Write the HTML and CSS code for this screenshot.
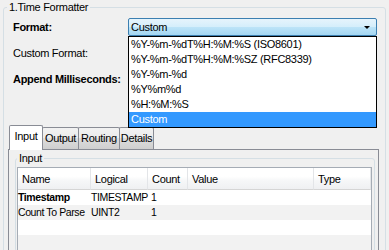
FILE: index.html
```html
<!DOCTYPE html>
<html lang="en">
<head>
  <meta charset="UTF-8" />
  <meta name="viewport" content="width=device-width, initial-scale=1.0"/>
  <title>Time Formatter</title>
  <link rel="stylesheet" href="styles.css">
</head>
<body>

  <fieldset class="group">
    <legend>1.Time Formatter</legend>

    <div class="form">
      <label class="bold">Format:</label>
      <div class="combo">
        <span>Custom</span>
        <span class="arrow"></span>
        <ul class="dropdown">
          <li>%Y-%m-%dT%H:%M:%S (ISO8601)</li>
          <li>%Y-%m-%dT%H:%M:%SZ (RFC8339)</li>
          <li>%Y-%m-%d</li>
          <li>%Y%m%d</li>
          <li>%H:%M:%S</li>
          <li class="selected">Custom</li>
        </ul>
      </div>

      <label>Custom Format:</label>
      <div></div>

      <label class="bold">Append Milliseconds:</label>
      <div></div>
    </div>

    <div class="tabs">
      <div class="tab-strip">
        <div class="tab tab-input active">Input</div>
        <div class="tab tab-output">Output</div>
        <div class="tab tab-routing">Routing</div>
        <div class="tab tab-details">Details</div>
      </div>

      <div class="tab-panel">
        <fieldset class="subgroup">
          <legend>Input</legend>
          <table class="grid">
            <colgroup>
              <col class="c-name">
              <col class="c-logical">
              <col class="c-count">
              <col class="c-value">
              <col class="c-type">
            </colgroup>
            <thead>
              <tr>
                <th>Name</th>
                <th>Logical</th>
                <th>Count</th>
                <th>Value</th>
                <th>Type</th>
              </tr>
            </thead>
            <tbody>
              <tr>
                <td class="bold">Timestamp</td>
                <td>TIMESTAMP</td>
                <td class="count">1</td>
                <td></td>
                <td></td>
              </tr>
              <tr>
                <td>Count To Parse</td>
                <td>UINT2</td>
                <td class="count">1</td>
                <td></td>
                <td></td>
              </tr>
              <tr><td></td><td></td><td></td><td></td><td></td></tr>
              <tr><td></td><td></td><td></td><td></td><td></td></tr>
            </tbody>
          </table>
        </fieldset>
      </div>
    </div>
  </fieldset>

</body>
</html>
```

FILE: styles.css
```css
body {
  margin: 0;
  height: 250px;
  overflow: hidden;
  background-color: #f0f0f0;
  color: #000;
  font-family: "Liberation Sans", "DejaVu Sans", sans-serif;
  font-size: 11px;
  letter-spacing: -0.3px;
}
.bold {
  font-weight: bold;
}

/* outer group box */
.group {
  margin: 1px 3px 0 3px;
  padding: 4px 6px 0 4px;
  border: 1px solid #d5dfe5;
  border-radius: 3px;
  min-width: 0;
}
.group > legend {
  margin-left: -1px;
  padding: 0 2px;
  line-height: 13px;
}

/* label / control rows */
.form {
  display: grid;
  grid-template-columns: 115px 1fr;
  grid-auto-rows: 18px;
  row-gap: 8px;
  align-items: center;
  padding: 0 2px 0 5px;
}
.combo {
  position: relative;
  box-sizing: border-box;
  height: 18px;
  display: flex;
  align-items: center;
  justify-content: space-between;
  padding: 0 6px 0 2px;
  border: 1px solid #3c7fb1;
  border-radius: 2px;
  background: linear-gradient(#e6f4fc 0%, #d4eefb 50%, #bde4f8 50%, #a4d6f1 100%);
}
.arrow {
  width: 0;
  height: 0;
  border-left: 3px solid transparent;
  border-right: 3px solid transparent;
  border-top: 3px solid #000;
}
.dropdown {
  position: absolute;
  top: 17px;
  left: -1px;
  right: -1px;
  z-index: 2;
  margin: 0;
  padding: 0;
  list-style: none;
  background-color: #fff;
  border: 1px solid #000;
}
.dropdown li {
  line-height: 15px;
  padding-left: 2px;
  white-space: nowrap;
}
.dropdown li.selected {
  background-color: #3399ff;
  color: #fff;
}

/* tabs */
.tabs {
  margin-top: 37px;
}
.tab-strip {
  display: flex;
  align-items: flex-end;
  height: 24px;
  padding-left: 1px;
}
.tab {
  box-sizing: border-box;
  height: 22px;
  margin-right: -1px;
  border: 1px solid #898c95;
  border-bottom: none;
  border-radius: 2px 2px 0 0;
  background: linear-gradient(#f2f2f2 0%, #ebebeb 50%, #dddddd 50%, #cfcfcf 100%);
  text-align: center;
  line-height: 20px;
}
.tab.active {
  position: relative;
  z-index: 1;
  height: 25px;
  margin-bottom: -1px;
  background: #fff;
  line-height: 21px;
}
.tab-input { width: 34px; }
.tab-output { width: 37px; }
.tab-routing { width: 42px; }
.tab-details { width: 35px; }

.tab-panel {
  border: 1px solid #898c95;
  padding: 2px 3px 0 6px;
  height: 101px;
}

/* inner group box */
.subgroup {
  margin: 0;
  padding: 2px 2px 0 1px;
  border: 1px solid #d5dfe5;
  border-radius: 3px;
  min-width: 0;
}
.subgroup > legend {
  padding: 0 2px;
  line-height: 13px;
}

/* list view */
.grid {
  width: 100%;
  table-layout: fixed;
  border-collapse: separate;
  border-spacing: 0;
  border: 1px solid #a5acb5;
  background-color: #fff;
}
.c-name { width: 73px; }
.c-logical { width: 57px; }
.c-count { width: 40px; }
.c-value { width: 126px; }
.grid th {
  box-sizing: border-box;
  height: 22px;
  padding: 0 0 0 4px;
  text-align: left;
  font-weight: normal;
  border-right: 1px solid #e3e5e8;
  border-bottom: 1px solid #d5d5d5;
  background: linear-gradient(#ffffff 0%, #ffffff 40%, #f6f7f8 60%, #eff0f2 100%);
}
.grid td {
  height: 15px;
  padding: 0;
  font-size: 10.5px;
  letter-spacing: -0.4px;
  line-height: 15px;
  white-space: nowrap;
}
.grid td.count {
  padding-left: 3px;
}
.grid tbody tr:nth-child(even) td {
  background-color: #f2f2f2;
}
```
